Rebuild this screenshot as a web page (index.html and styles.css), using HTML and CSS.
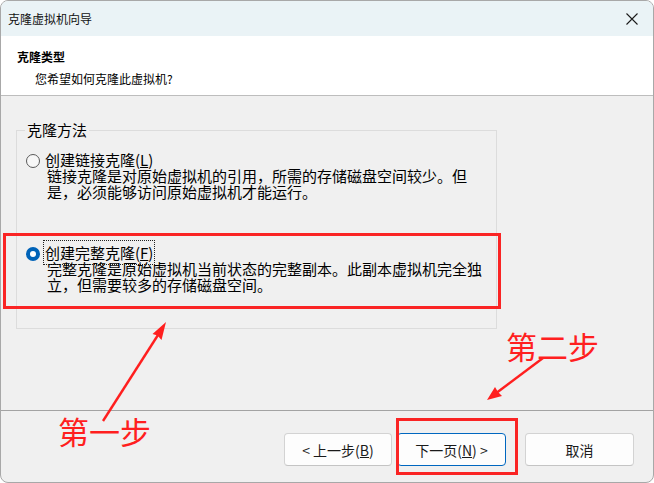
FILE: index.html
```html
<!DOCTYPE html>
<html lang="zh-CN">
<head>
<meta charset="utf-8">
<title>克隆虚拟机向导</title>
<link rel="stylesheet" href="styles.css">
</head>
<body>
<div class="window">
  <div class="titlebar">
    <span class="title">克隆虚拟机向导</span>
    <span class="close" aria-label="关闭">
      <svg width="12" height="12" viewBox="0 0 12 12"><path d="M0.5 0.5 L11.5 11.5 M11.5 0.5 L0.5 11.5" stroke="#1b1b1b" stroke-width="1.1" fill="none"/></svg>
    </span>
  </div>
  <div class="header">
    <div class="h-title">克隆类型</div>
    <div class="h-sub">您希望如何克隆此虚拟机?</div>
  </div>
  <div class="content">
    <fieldset class="group">
      <legend>克隆方法</legend>
      <div class="option first">
        <span class="radio"></span>
        <div class="opt-text">
          <div class="opt-label"><span>创建链接克隆(<u>L</u>)</span></div>
          <div class="opt-desc">链接克隆是对原始虚拟机的引用，所需的存储磁盘空间较少。但<br>是，必须能够访问原始虚拟机才能运行。</div>
        </div>
      </div>
      <div class="option second">
        <span class="radio checked"></span>
        <div class="opt-text">
          <div class="opt-label"><span class="focus">创建完整克隆(<u>F</u>)</span></div>
          <div class="opt-desc">完整克隆是原始虚拟机当前状态的完整副本。此副本虚拟机完全独<br>立，但需要较多的存储磁盘空间。</div>
        </div>
      </div>
    </fieldset>
  </div>
  <div class="footer">
    <button class="btn back">&lt; 上一步(<u>B</u>)</button>
    <button class="btn next primary">下一页(<u>N</u>) &gt;</button>
    <button class="btn cancel">取消</button>
  </div>

  <div class="mark mark-option"></div>
  <div class="mark mark-next"></div>
  <div class="note note-one">第一步</div>
  <div class="note note-two">第二步</div>
  <svg class="arrows" width="654" height="483" viewBox="0 0 654 483">
    <line x1="103" y1="421" x2="158" y2="335" stroke="#ff1f1f" stroke-width="2.4"/>
    <polygon points="166,322 161.5,340 157.5,335.5 152.5,334" fill="#ff1f1f"/>
    <line x1="543" y1="358" x2="497" y2="392.5" stroke="#ff1f1f" stroke-width="2.4"/>
    <polygon points="487,400 495,387 498,392 502,396" fill="#ff1f1f"/>
  </svg>
</div>
</body>
</html>
```
FILE: styles.css
```css
* { box-sizing: border-box; }
html, body { margin: 0; padding: 0; background: #ffffff; }
body {
  font-family: "Noto Sans CJK SC", "Liberation Sans", sans-serif;
  color: #000;
}
.window {
  position: relative;
  width: 654px;
  height: 483px;
  border: 1px solid #a8a8a8;
  border-radius: 8px;
  overflow: hidden;
  background: #f0f0f0;
  display: flex;
  flex-direction: column;
}
.titlebar {
  height: 35px;
  flex: none;
  background: #eaf3f6;
  display: flex;
  align-items: center;
  justify-content: space-between;
  padding: 0 15px 0 7px;
}
.title {
  font-size: 12px;
  line-height: 16px;
  color: #111;
}
.close { display: flex; width: 12px; height: 12px; }
.header {
  height: 60px;
  flex: none;
  background: #ffffff;
  border-bottom: 1px solid #bdbdbd;
  padding: 13px 0 0 16px;
}
.h-title {
  font-size: 12px;
  line-height: 16px;
  font-weight: 700;
}
.h-sub {
  font-size: 12px;
  line-height: 16px;
  margin-top: 6px;
  padding-left: 18px;
}
.content {
  height: 314px;
  flex: none;
  padding: 26px 0 0 15px;
}
.group {
  margin: 0;
  width: 481px;
  height: 207px;
  border: 1px solid #dcdcdc;
  padding: 0 8px;
  font-size: 15px;
  line-height: 16px;
}
.group legend {
  padding: 0 2px;
  font-size: 15px;
  line-height: 16px;
}
.option {
  display: flex;
  align-items: flex-start;
}
.option.first { margin-top: 14px; }
.option.second { margin-top: 45px; }
.radio {
  flex: none;
  width: 14px;
  height: 14px;
  margin: 2px 5px 0 1px;
  border-radius: 50%;
  border: 1px solid #5a5a5a;
  background: #f7f7f7;
}
.radio.checked {
  border: 4px solid #0063b8;
  background: #ffffff;
}
.opt-label { line-height: 16px; }
.opt-label .focus {
  outline: 1px dotted #222;
  outline-offset: 1px;
}
.opt-desc {
  padding-left: 2px;
  line-height: 16px;
}
.footer {
  flex: 1;
  border-top: 1px solid #a3a3a3;
  display: flex;
  justify-content: flex-end;
  align-items: flex-start;
  padding: 22px 19px 0 0;
}
.btn {
  height: 33px;
  width: 109px;
  border: 1px solid #d3d3d3;
  border-bottom-color: #c4c4c4;
  border-radius: 4px;
  background: #fdfdfd;
  font-family: "Noto Sans CJK SC", "Liberation Sans", sans-serif;
  font-size: 14px;
  color: #1a1a1a;
  padding: 0;
}
.btn.back { width: 108px; }
.btn.next { margin-left: 5px; }
.btn.cancel { margin-left: 19px; }
.btn.primary { border: 1px solid #0067c0; }
.mark {
  position: absolute;
  border: 3px solid #fa2424;
}
.mark-option { left: 2px; top: 232px; width: 498px; height: 76px; }
.mark-next { left: 395px; top: 417px; width: 122px; height: 57px; }
.note {
  position: absolute;
  font-size: 31px;
  line-height: 31px;
  color: #ff1f1f;
}
.note-one { left: 57px; top: 414px; }
.note-two { left: 505px; top: 329px; }
.arrows {
  position: absolute;
  left: -1px;
  top: -1px;
  pointer-events: none;
}
```
